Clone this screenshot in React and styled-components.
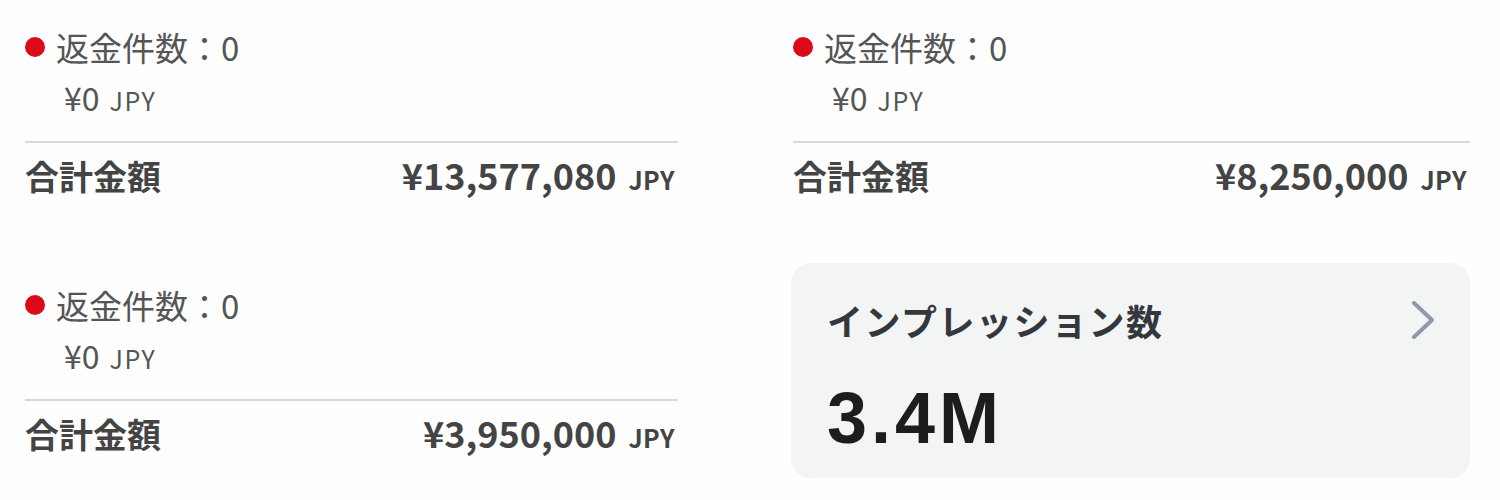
import React from "react";
import styled, { createGlobalStyle } from "styled-components";

const GlobalStyle = createGlobalStyle`
  html, body {
    margin: 0;
    padding: 0;
    background: #fefefe;
  }
  body {
    font-family: "Noto Sans CJK JP", "Noto Sans", sans-serif;
    -webkit-font-smoothing: antialiased;
  }
`;

const Page = styled.div`
  display: grid;
  grid-template-columns: 653px 677px;
  column-gap: 115px;
  row-gap: 67px;
  align-content: start;
  align-items: start;
  padding: 5px 0 0 25px;
  width: 1500px;
  height: 500px;
  box-sizing: border-box;
`;

const Section = styled.section`
  display: flex;
  flex-direction: column;
  padding-top: 20px;
`;

const RefundLine = styled.div`
  display: flex;
  align-items: center;
  gap: 11px;
  height: 44px;
  font-size: 33px;
  color: #555;
  line-height: 44px;
`;

const Dot = styled.span`
  width: 20px;
  height: 20px;
  border-radius: 50%;
  background: #dd0a1c;
  flex-shrink: 0;
`;

const SubAmount = styled.div`
  display: flex;
  align-items: baseline;
  margin-top: 8px;
  padding-left: 39px;
  height: 40px;
  line-height: 40px;
  font-size: 32px;
  color: #555;
`;

const Unit = styled.span`
  font-size: ${(p) => p.$size || 25}px;
  margin-left: ${(p) => p.$gap || 10}px;
  letter-spacing: ${(p) => p.$spacing || 1.5}px;
`;

const Divider = styled.hr`
  margin: 24px 0 0;
  border: none;
  border-top: 2px solid #d8d8d8;
`;

const TotalRow = styled.div`
  display: flex;
  justify-content: space-between;
  align-items: baseline;
  margin-top: 9px;
  padding-right: 3px;
  height: 44px;
  line-height: 44px;
  font-weight: 700;
  color: #444;
`;

const TotalLabel = styled.span`
  font-size: 34px;
`;

const TotalValue = styled.span`
  font-size: 36px;
`;

const Card = styled.div`
  display: flex;
  flex-direction: column;
  margin-left: -2px;
  padding: 33px 35px 24px 36px;
  background: #f3f4f4;
  border-radius: 20px;
  height: 215px;
  box-sizing: border-box;
`;

const CardHead = styled.div`
  display: flex;
  align-items: center;
  justify-content: space-between;
  height: 48px;
`;

const CardTitle = styled.div`
  font-size: 36px;
  font-weight: 700;
  color: #34383d;
  line-height: 48px;
  letter-spacing: 1.5px;
`;

const CardValue = styled.div`
  margin-top: 38px;
  font-family: "Liberation Sans", Arial, sans-serif;
  font-size: 72px;
  font-weight: 700;
  line-height: 72px;
  color: #1b1d1f;
  letter-spacing: 4px;
`;

const Chevron = () => (
  <svg width="24" height="38" viewBox="0 0 24 38" fill="none">
    <path d="M3 2 L21 19 L3 36" stroke="#8e9aa8" strokeWidth="4" strokeLinecap="round" strokeLinejoin="round" />
  </svg>
);

const RefundBlock = ({ total }) => (
  <Section>
    <RefundLine>
      <Dot />
      <span>返金件数：0</span>
    </RefundLine>
    <SubAmount>
      ¥0<Unit>JPY</Unit>
    </SubAmount>
    <Divider />
    <TotalRow>
      <TotalLabel>合計金額</TotalLabel>
      <TotalValue>
        {total}
        <Unit $size={25} $gap={12} $spacing={0.5}>JPY</Unit>
      </TotalValue>
    </TotalRow>
  </Section>
);

export default function App() {
  return (
    <>
      <GlobalStyle />
      <Page>
        <RefundBlock total="¥13,577,080" />
        <RefundBlock total="¥8,250,000" />
        <RefundBlock total="¥3,950,000" />
        <Card>
          <CardHead>
            <CardTitle>インプレッション数</CardTitle>
            <Chevron />
          </CardHead>
          <CardValue>3.4M</CardValue>
        </Card>
      </Page>
    </>
  );
}
